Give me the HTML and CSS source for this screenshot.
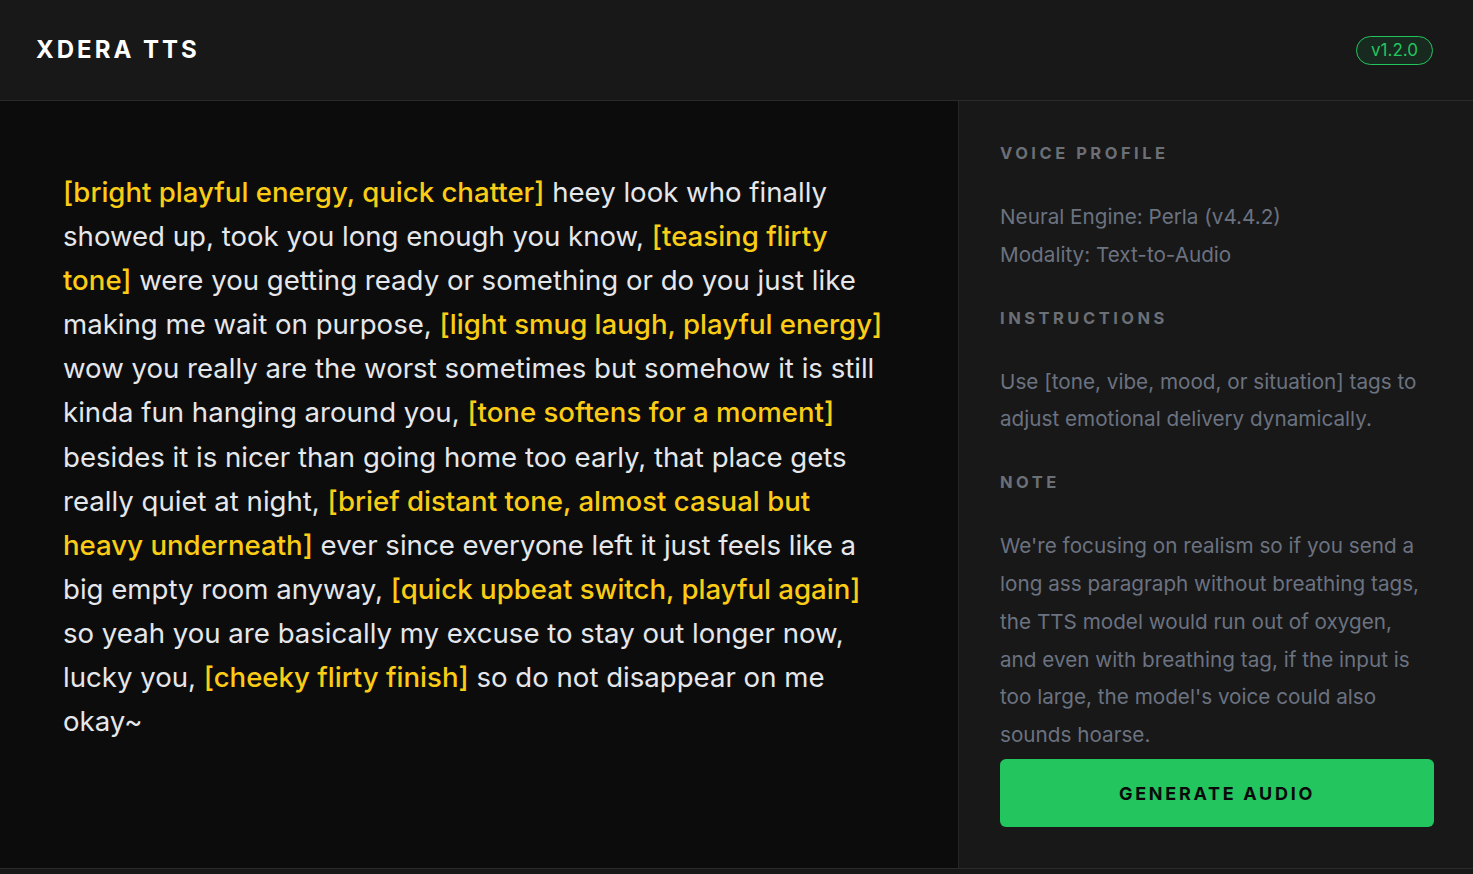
FILE: index.html
```html
<!DOCTYPE html>
<html lang="en">
<head>
<meta charset="utf-8">
<title>Xdera TTS</title>
<link rel="stylesheet" href="styles.css">
</head>
<body>
<header class="topbar">
  <div class="brand">XDERA TTS</div>
  <div class="version">v1.2.0</div>
</header>
<main class="workspace">
  <section class="editor">
    <p class="script"><span class="tag">[bright playful energy, quick chatter]</span> heey look who finally showed up, took you long enough you know, <span class="tag">[teasing flirty tone]</span> were you getting ready or something or do you just like making me wait on purpose, <span class="tag">[light smug laugh, playful energy]</span> wow you really are the worst sometimes but somehow it is still kinda fun hanging around you, <span class="tag">[tone softens for a moment]</span> besides it is nicer than going home too early, that place gets really quiet at night, <span class="tag">[brief distant tone, almost casual but heavy underneath]</span> ever since everyone left it just feels like a big empty room anyway, <span class="tag">[quick upbeat switch, playful again]</span> so yeah you are basically my excuse to stay out longer now, lucky you, <span class="tag">[cheeky flirty finish]</span> so do not disappear on me okay~</p>
  </section>
  <aside class="sidebar">
    <div class="section">
      <h2 class="label">VOICE PROFILE</h2>
      <p class="info">Neural Engine: Perla (v4.4.2)<br>Modality: Text-to-Audio</p>
    </div>
    <div class="section">
      <h2 class="label">INSTRUCTIONS</h2>
      <p class="info">Use [tone, vibe, mood, or situation] tags to adjust emotional delivery dynamically.</p>
    </div>
    <div class="section">
      <h2 class="label">NOTE</h2>
      <p class="info">We're focusing on realism so if you send a long ass paragraph without breathing tags, the TTS model would run out of oxygen, and even with breathing tag, if the input is too large, the model's voice could also sounds hoarse.</p>
    </div>
    <button class="generate">GENERATE AUDIO</button>
  </aside>
</main>
</body>
</html>
```

FILE: styles.css
```css
* { box-sizing: border-box; }
html, body { margin: 0; padding: 0; }
body {
  background: #181818;
  font-family: Inter, "Noto Sans", sans-serif;
  color: #e5e7eb;
  height: 874px;
  overflow: hidden;
}
.topbar {
  height: 101px;
  display: flex;
  align-items: center;
  justify-content: space-between;
  padding: 0 40px 0 36px;
  background: #181818;
  border-bottom: 1px solid #2a2a2a;
}
.brand {
  font-size: 24px;
  font-weight: 700;
  letter-spacing: 3px;
  color: #ffffff;
  margin-top: -2px;
}
.version {
  height: 29px;
  padding: 0 14px;
  display: flex;
  align-items: center;
  border: 1px solid #22c55e;
  border-radius: 15px;
  background: rgba(34, 197, 94, 0.1);
  color: #22c55e;
  font-size: 17px;
}
.workspace {
  display: flex;
  height: 768px;
  border-bottom: 1px solid #2a2a2a;
}
.editor {
  width: 958px;
  background: #0c0c0c;
  padding: 69px 65px 0 63px;
}
.script {
  margin: 0;
  font-size: 27.6px;
  line-height: 44.1px;
  color: #e5e7eb;
}
.tag { color: #facc15; font-weight: 500; }
.sidebar {
  flex: 1;
  background: #181818;
  border-left: 1px solid #262626;
  padding: 40px 39px 41px 41px;
  display: flex;
  flex-direction: column;
}
.label {
  margin: 0;
  font-size: 16.5px;
  font-weight: 700;
  letter-spacing: 3.5px;
  color: #6b6f76;
  line-height: 24px;
}
.info {
  margin: 33px 0 32px 0;
  font-size: 20.7px;
  line-height: 37.8px;
  color: #6b7280;
}
.section:last-of-type .info { margin-bottom: 0; }
.generate {
  margin-top: auto;
  height: 68px;
  width: 100%;
  border: none;
  border-radius: 6px;
  background: #22c55e;
  color: #0a0a0a;
  font-family: Inter, "Noto Sans", sans-serif;
  font-size: 18px;
  font-weight: 700;
  letter-spacing: 2.7px;
}
```
